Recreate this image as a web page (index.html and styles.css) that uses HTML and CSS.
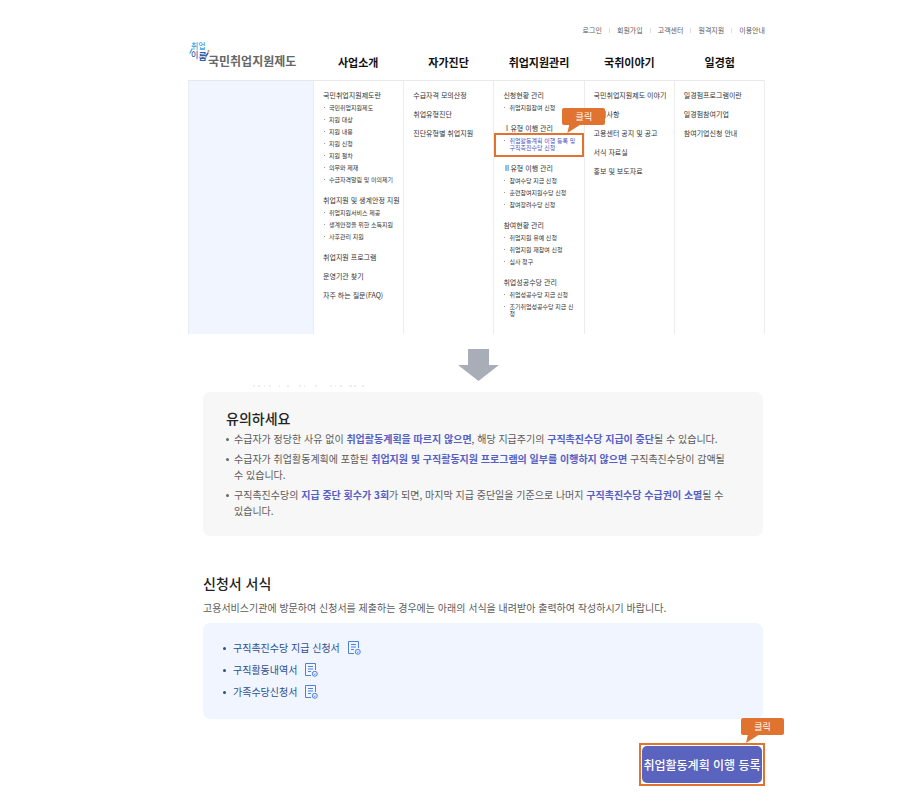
FILE: index.html
```html
<!DOCTYPE html>
<html lang="ko">
  <head>
    <meta charset="UTF-8" />
    <title>국민취업지원제도</title>
    <link rel="stylesheet" href="styles.css">
  </head>
  <body>
    <header>
      <div class="util">
        <a href="#">로그인</a>
        <a href="#">회원가입</a>
        <a href="#">고객센터</a>
        <a href="#">원격지원</a>
        <a href="#">이용안내</a>
      </div>
      <div class="gnb">
        <a class="logo" href="#">
          <span class="mark">
            <span class="mark-top">취업</span>
            <span class="mark-bottom">이<b>룸</b></span>
            <svg class="swash" width="22" height="24" viewBox="0 0 22 24" fill="none" stroke-linecap="round">
              <path d="M4 8L2 12" stroke="#4aa8e0" stroke-width="1.4" />
              <path d="M18 15L20 12" stroke="#2f5fa8" stroke-width="1.4" />
              <circle cx="20.500" cy="10" r="1" fill="#ee7f3b" />
            </svg>
          </span>
          <span class="logo-text">국민취업지원제도</span>
        </a>
        <a class="gnb-item" href="#">사업소개</a>
        <a class="gnb-item" href="#">자가진단</a>
        <a class="gnb-item" href="#">취업지원관리</a>
        <a class="gnb-item" href="#">국취이야기</a>
        <a class="gnb-item" href="#">일경험</a>
      </div>
    </header>

    <nav class="mega">
      <div class="col blank"></div>
      <div class="col">
        <div class="group">
          <h3><a href="#">국민취업지원제도란</a></h3>
          <ul>
            <li><a href="#">국민취업지원제도</a></li>
            <li><a href="#">지원 대상</a></li>
            <li><a href="#">지원 내용</a></li>
            <li><a href="#">지원 신청</a></li>
            <li><a href="#">지원 절차</a></li>
            <li><a href="#">의무와 제재</a></li>
            <li><a href="#">수급자격알림 및 이의제기</a></li>
          </ul>
        </div>
        <div class="group">
          <h3><a href="#">취업지원 및 생계안정 지원</a></h3>
          <ul>
            <li><a href="#">취업지원서비스 제공</a></li>
            <li><a href="#">생계안정을 위한 소득지원</a></li>
            <li><a href="#">사후관리 지원</a></li>
          </ul>
        </div>
        <h3><a href="#">취업지원 프로그램</a></h3>
        <h3><a href="#">운영기관 찾기</a></h3>
        <h3><a href="#">자주 하는 질문(FAQ)</a></h3>
      </div>
      <div class="col">
        <h3><a href="#">수급자격 모의산정</a></h3>
        <h3><a href="#">취업유형진단</a></h3>
        <h3><a href="#">진단유형별 취업지원</a></h3>
      </div>
      <div class="col">
        <div class="group">
          <h3><a href="#">신청현황 관리</a></h3>
          <ul>
            <li><a href="#">취업지원참여 신청</a></li>
          </ul>
        </div>
        <div class="group">
          <h3><a href="#">Ⅰ유형 이행 관리</a></h3>
          <ul>
            <li class="current">
              <a href="#">취업활동계획 이행 등록 및 구직촉진수당 신청</a>
              <span class="callout">클릭</span>
            </li>
          </ul>
        </div>
        <div class="group">
          <h3><a href="#">Ⅱ유형 이행 관리</a></h3>
          <ul>
            <li><a href="#">참여수당 지급 신청</a></li>
            <li><a href="#">훈련참여지원수당 신청</a></li>
            <li><a href="#">참여장려수당 신청</a></li>
          </ul>
        </div>
        <div class="group">
          <h3><a href="#">참여현황 관리</a></h3>
          <ul>
            <li><a href="#">취업지원 유예 신청</a></li>
            <li><a href="#">취업지원 재참여 신청</a></li>
            <li><a href="#">심사 청구</a></li>
          </ul>
        </div>
        <div class="group">
          <h3><a href="#">취업성공수당 관리</a></h3>
          <ul>
            <li><a href="#">취업성공수당 지급 신청</a></li>
            <li><a href="#">조기취업성공수당 지급 신청</a></li>
          </ul>
        </div>
      </div>
      <div class="col">
        <h3><a href="#">국민취업지원제도 이야기</a></h3>
        <h3><a href="#">공지사항</a></h3>
        <h3><a href="#">고용센터 공지 및 공고</a></h3>
        <h3><a href="#">서식 자료실</a></h3>
        <h3><a href="#">홍보 및 보도자료</a></h3>
      </div>
      <div class="col">
        <h3><a href="#">일경험프로그램이란</a></h3>
        <h3><a href="#">일경험참여기업</a></h3>
        <h3><a href="#">참여기업신청 안내</a></h3>
      </div>
    </nav>

    <div class="arrow">
      <svg width="41" height="32" viewBox="0 0 41 32">
        <path d="M10 0H31V16H41L20.5 32L0 16H10Z" fill="#a9adb8" />
      </svg>
    </div>

    <main>
      <svg class="cut-line" width="114" height="2" viewBox="0 0 114 2">
        <path d="M1 1h2M6 1h2M12 1h1M17 1h2M27 1h1M35 1h2M47 1h2M52 1h1M63 1h2M78 1h2M83 1h1M88 1h2M97 1h3M102 1h2M110 1h2" stroke="#dcdcdc" />
      </svg>

      <section class="notice">
        <h2>유의하세요</h2>
        <ul>
          <li>수급자가 정당한 사유 없이 <strong>취업활동계획을 따르지 않으면</strong>, 해당 지급주기의 <strong>구직촉진수당 지급이 중단</strong>될 수 있습니다.</li>
          <li>수급자가 취업활동계획에 포함된 <strong>취업지원 및 구직활동지원 프로그램의 일부를 이행하지 않으면</strong> 구직촉진수당이 감액될 수 있습니다.</li>
          <li>구직촉진수당의 <strong>지급 중단 횟수가 3회</strong>가 되면, 마지막 지급 중단일을 기준으로 나머지 <strong>구직촉진수당 수급권이 소멸</strong>될 수 있습니다.</li>
        </ul>
      </section>

      <section class="forms">
        <h2>신청서 서식</h2>
        <p>고용서비스기관에 방문하여 신청서를 제출하는 경우에는 아래의 서식을 내려받아 출력하여 작성하시기 바랍니다.</p>
        <svg class="defs" width="0" height="0">
          <symbol id="doc" viewBox="0 0 13 14">
            <path d="M10.5 7V.5H.5V12.500H6" />
            <path d="M3 3.500H8M3 6H8M3 8.500H6" />
            <circle cx="9.800" cy="10.800" r="2.500" />
            <path d="M8.700 10.500L9.800 11.600L10.900 10.500" />
          </symbol>
        </svg>
        <ul>
          <li><a href="#">구직촉진수당 지급 신청서 <svg class="doc"><use href="#doc" /></svg></a></li>
          <li><a href="#">구직활동내역서 <svg class="doc"><use href="#doc" /></svg></a></li>
          <li><a href="#">가족수당신청서 <svg class="doc"><use href="#doc" /></svg></a></li>
        </ul>
      </section>
    </main>

    <div class="actions">
      <div class="focus-box">
        <button type="button">취업활동계획 이행 등록</button>
        <span class="callout">클릭</span>
      </div>
    </div>
  </body>
</html>
```
FILE: styles.css
```css
* {
  box-sizing: border-box;
}
body {
  font-family: "Noto Sans CJK KR", sans-serif;
  font-size: 10px;
  line-height: 16px;
  background-color: #fff;
  color: #5c5c5c;
  margin: 0;
  padding: 24px 146px 15px 188px;
}
h2,
h3,
p,
ul {
  margin: 0;
  padding: 0;
}
ul {
  list-style: none;
}
a {
  color: inherit;
  text-decoration: none;
}

/* header */
.util {
  display: flex;
  justify-content: flex-end;
  font-size: 7px;
  line-height: 12px;
}
.util a + a {
  display: flex;
  align-items: center;
}
.util a + a::before {
  content: "";
  width: 1px;
  height: 5px;
  margin: 0 7px;
  background: #ddd;
}
.gnb,
.mega {
  display: grid;
  grid-template-columns: 125px repeat(5, 1fr);
}
.gnb {
  height: 44px;
}
.gnb-item {
  padding-top: 18px;
  text-align: center;
  font-size: 11px;
  font-weight: bold;
  color: #111;
}
.logo {
  display: flex;
  white-space: nowrap;
}
.mark {
  position: relative;
  width: 20px;
  padding: 5px 0 0 3px;
  font-size: 8px;
  font-weight: 500;
  line-height: 9px;
}
.mark-top,
.mark-bottom {
  display: block;
}
.mark-top {
  color: #4aa8e0;
}
.mark-bottom {
  color: #2f5fa8;
}
.mark-bottom b {
  font-size: 9px;
  vertical-align: -2px;
}
.swash {
  position: absolute;
  left: 0;
  top: 5px;
}
.logo-text {
  padding-top: 17px;
  font-size: 12px;
  font-weight: bold;
  color: #666;
}

/* open menu */
.mega {
  min-height: 254px;
  border-top: 1px solid #e8e8e8;
  border-right: 1px solid #ececec;
}
.col {
  display: flex;
  flex-direction: column;
  gap: 9px;
  padding: 9px 0 12px 9px;
  border-left: 1px solid #ececec;
}
.blank {
  background: #f0f5ff;
}
.col h3 {
  font-size: 7px;
  font-weight: normal;
  line-height: 10px;
  color: #333;
  white-space: nowrap;
}
.col ul {
  margin-top: 2px;
}
.col li {
  position: relative;
  padding: 2px 7px 3px 6px;
  font-size: 6px;
  line-height: 7px;
  color: #333;
}
.col li::before {
  content: "";
  position: absolute;
  left: 1px;
  top: 5px;
  width: 1px;
  height: 1px;
  background: #999;
}
.col .current {
  color: #4a55c0;
}
.current::after {
  content: "";
  position: absolute;
  inset: -2px 0 -3px -9px;
  border: 2px solid #e0732f;
}

.callout {
  position: absolute;
  z-index: 1;
  width: 43px;
  border-radius: 2px;
  background: #e0732f;
  color: #fff;
  font-size: 9px;
  line-height: 17px;
  text-align: center;
}
.callout::after {
  content: "";
  position: absolute;
  left: 5px;
  top: 16px;
  width: 14px;
  height: 9px;
  background: #e0732f;
  clip-path: polygon(2px 0, 14px 0, 0 100%);
}
.current .callout {
  left: 59px;
  top: -27px;
}

.arrow {
  padding: 15px 0 0 270px;
}
.arrow svg,
.cut-line {
  display: block;
}

/* content */
main {
  margin: 0 2px 0 15px;
}
h2 {
  font-size: 14px;
  font-weight: 500;
  line-height: 20px;
  color: #222;
}
.cut-line {
  margin: 4px 0 5px 49px;
}
.notice {
  padding: 16px 36px 17px 23px;
  border-radius: 7px;
  background: #f7f7f7;
}
.notice ul {
  display: flex;
  flex-direction: column;
  gap: 4px;
  margin-top: 3px;
}
.notice li,
.forms li {
  position: relative;
}
.notice li {
  padding-left: 8px;
}
.notice li::before,
.forms li::before {
  content: "";
  position: absolute;
  left: 0;
  top: 7px;
  width: 3px;
  height: 3px;
  border-radius: 50%;
  background: #666;
}
.notice strong {
  font-weight: bold;
  color: #5560c4;
}
.forms {
  margin-top: 37px;
}
.forms p {
  margin: 7px 0;
}
.forms ul {
  padding: 14px 20px 16px;
  border-radius: 7px;
  background: #f0f5ff;
}
.forms li {
  padding-left: 10px;
  line-height: 22px;
  color: #2c4f8f;
}
.forms li::before {
  top: 10px;
  background: #2c4f8f;
}
.forms li a {
  display: inline-flex;
  align-items: center;
  gap: 8px;
}
.defs {
  position: absolute;
}
.doc {
  width: 13px;
  height: 14px;
  fill: none;
  stroke: #4c82dc;
}

.actions {
  display: flex;
  justify-content: flex-end;
  margin-top: 24px;
}
.focus-box {
  position: relative;
  padding: 1px;
  border: 2px solid #e0732f;
}
.focus-box button {
  display: block;
  width: 120px;
  height: 37px;
  padding: 0;
  border: none;
  border-radius: 5px;
  background: #5a63bd;
  color: #fff;
  font-family: inherit;
  font-size: 12px;
  font-weight: 500;
  cursor: pointer;
}
.focus-box .callout {
  left: 100px;
  top: -27px;
}
```
